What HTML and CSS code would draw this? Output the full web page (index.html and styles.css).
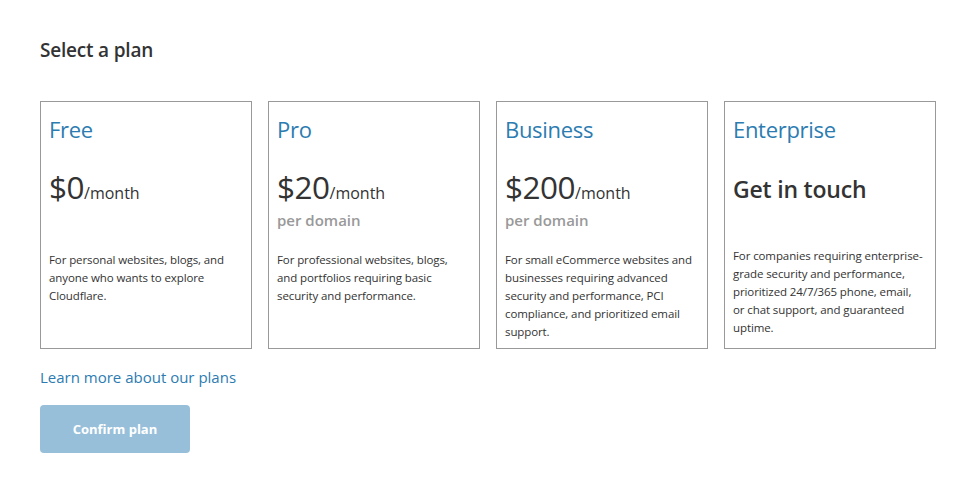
FILE: index.html
```html
<!DOCTYPE html>
<html lang="en">

<head>
  <meta charset="UTF-8">
  <meta name="viewport" content="width=device-width, initial-scale=1.0">
  <title>Select a plan</title>
  <link rel="stylesheet" href="styles.css">
</head>

<body>
  <div class="wrap">
    <h2 class="pageTitle">Select a plan</h2>

    <!-- plan cards -->
    <div class="plans">
      <div class="plan">
        <h3 class="planName">Free</h3>
        <div class="price"><span class="amount">$0</span>/month</div>
        <div class="perDomain"></div>
        <p class="desc">For personal websites, blogs, and anyone who wants to explore Cloudflare.</p>
      </div>
      <div class="plan">
        <h3 class="planName">Pro</h3>
        <div class="price"><span class="amount">$20</span>/month</div>
        <div class="perDomain">per domain</div>
        <p class="desc">For professional websites, blogs, and portfolios requiring basic security and performance.</p>
      </div>
      <div class="plan">
        <h3 class="planName">Business</h3>
        <div class="price"><span class="amount">$200</span>/month</div>
        <div class="perDomain">per domain</div>
        <p class="desc">For small eCommerce websites and businesses requiring advanced security and performance, PCI compliance, and prioritized email support.</p>
      </div>
      <div class="plan">
        <h3 class="planName">Enterprise</h3>
        <div class="touch">Get in touch</div>
        <p class="desc">For companies requiring enterprise-grade security and performance, prioritized 24/7/365 phone, email, or chat support, and guaranteed uptime.</p>
      </div>
    </div>

    <a class="learnMore" href="#">Learn more about our plans</a>
    <button class="confirmBt" disabled>Confirm plan</button>
  </div>
</body>

</html>
```

FILE: styles.css
```css
body {
  margin: 0;
  font-family: "Open Sans", "Noto Sans", sans-serif;
  color: #333;
  background: #fff;
}

.wrap {
  width: 896px;
  padding: 36px 40px 0;
}

.pageTitle {
  margin: 0;
  font-size: 19px;
  font-weight: 600;
  line-height: 28px;
  letter-spacing: -0.2px;
}

.plans {
  display: grid;
  grid-template-columns: repeat(4, 1fr);
  gap: 16px;
  margin-top: 37px;
}

.plan {
  height: 248px;
  box-sizing: border-box;
  border: 1px solid #999;
  padding: 12px 11px 0 8px;
}

.planName {
  margin: 0;
  font-size: 22px;
  font-weight: 400;
  line-height: 30px;
  color: #2c7cb1;
  letter-spacing: -0.3px;
}

.price {
  margin-top: 25px;
  height: 36px;
  font-size: 16px;
  line-height: 36px;
  color: #333;
}

.amount {
  font-size: 31.5px;
  letter-spacing: -0.5px;
}

.perDomain {
  height: 22px;
  margin-top: 4px;
  font-size: 15px;
  font-weight: 600;
  line-height: 22px;
  color: #999;
}

.touch {
  margin-top: 27px;
  height: 36px;
  font-size: 23px;
  font-weight: 600;
  line-height: 36px;
  letter-spacing: -0.2px;
}

.desc {
  margin: 20px 0 0;
  font-size: 11.5px;
  line-height: 18px;
  letter-spacing: -0.1px;
}

.touch + .desc {
  margin-top: 40px;
}

.learnMore {
  display: block;
  margin-top: 17px;
  font-size: 15px;
  line-height: 22px;
  color: #2c7cb1;
  text-decoration: none;
}

.confirmBt {
  display: block;
  margin-top: 17px;
  width: 150px;
  height: 48px;
  border: 0;
  border-radius: 4px;
  background: #97bfda;
  color: #fff;
  font-family: "Open Sans", sans-serif;
  font-size: 13px;
  font-weight: 700;
}
```
